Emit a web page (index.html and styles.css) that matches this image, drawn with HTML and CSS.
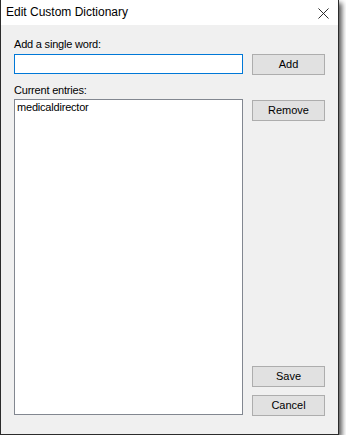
FILE: index.html
```html
<!DOCTYPE html>
<html>
<head>
<meta charset="utf-8">
<link rel="stylesheet" href="styles.css">
</head>
<body>
<div class="window">
  <div class="titlebar">
    <span class="title">Edit Custom Dictionary</span>
    <svg class="close" width="11" height="11" viewBox="0 0 12 12">
      <path d="M0.5 0.5 L11.5 11.5 M11.5 0.5 L0.5 11.5" stroke="#1a1a1a" stroke-width="1" fill="none"/>
    </svg>
  </div>
  <div class="content">
    <div class="label">Add a single word:</div>
    <div></div>
    <div class="input"></div>
    <div class="btn btn-add">Add</div>
    <div class="label label-entries">Current entries:</div>
    <div></div>
    <div class="list"><div class="item">medicaldirector</div></div>
    <div class="side">
      <div class="btn">Remove</div>
      <div class="bottom">
        <div class="btn">Save</div>
        <div class="btn">Cancel</div>
      </div>
    </div>
  </div>
</div>
</body>
</html>
```
FILE: styles.css
```css
html, body {
  margin: 0;
  padding: 0;
  background: #ffffff;
}
body {
  font-family: "Liberation Sans", Arial, sans-serif;
  font-size: 11px;
  color: #000;
}
.window {
  width: 337px;
  height: 434px;
  border-left: 1px solid #2b2b2b;
  border-right: 1px solid #2b2b2b;
  border-bottom: 1px solid #2b2b2b;
  background: #f0f0f0;
  box-shadow: 3px 3px 5px rgba(0, 0, 0, 0.65);
  display: flex;
  flex-direction: column;
}
.titlebar {
  height: 25px;
  background: #ffffff;
  display: flex;
  align-items: center;
  justify-content: space-between;
  padding: 0 9px 0 5px;
}
.title {
  font-size: 12px;
  padding-bottom: 1px;
}
.close {
  margin-top: 1px;
}
.content {
  display: grid;
  grid-template-columns: 229px 73px;
  grid-template-rows: 13px 24px 22px 318px;
  column-gap: 9px;
  padding: 13px 0 0 13px;
}
.label {
  line-height: 13px;
  height: 13px;
  white-space: nowrap;
  letter-spacing: -0.2px;
}
.label-entries {
  margin-top: 9px;
}
.input {
  margin-top: 3px;
  height: 18px;
  border: 1px solid #0078d7;
  background: #fff;
}
.btn {
  height: 19px;
  border: 1px solid #adadad;
  background: #e1e1e1;
  display: flex;
  align-items: center;
  justify-content: center;
  line-height: 13px;
}
.btn-add {
  margin-top: 3px;
}
.list {
  margin-top: 2px;
  height: 314px;
  border: 1px solid #828790;
  background: #fff;
}
.item {
  padding: 1px 0 0 2px;
  line-height: 13px;
  letter-spacing: -0.2px;
}
.side {
  margin-top: 3px;
  display: flex;
  flex-direction: column;
  justify-content: space-between;
}
.bottom {
  display: flex;
  flex-direction: column;
  gap: 8px;
  margin-bottom: -1px;
}
```
